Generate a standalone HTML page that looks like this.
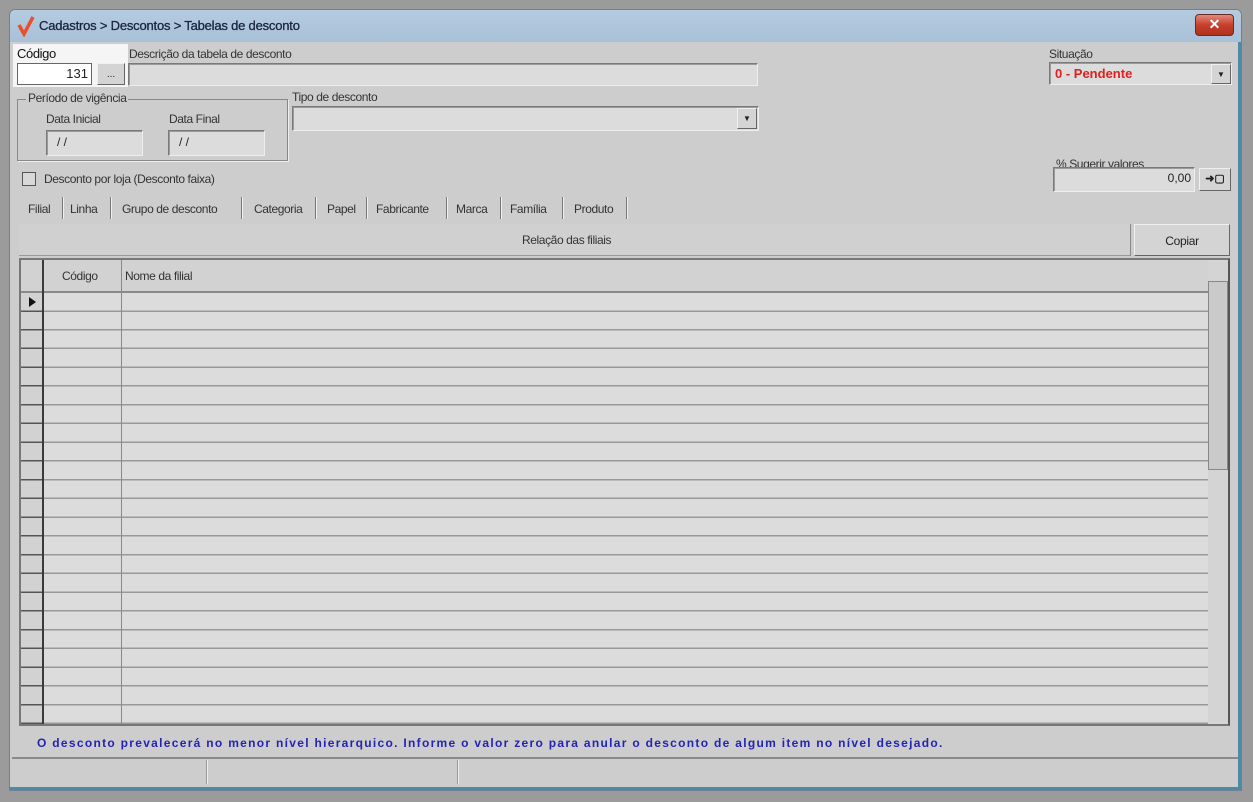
<!DOCTYPE html>
<html><head><meta charset="utf-8"><style>
*{margin:0;padding:0;box-sizing:border-box}
body{width:1253px;height:802px;background:#9b9b9b;position:relative;overflow:hidden;font-family:"Liberation Sans",sans-serif;font-size:12px;color:#222}
.a{position:absolute}
.win{left:9px;top:9px;width:1233px;height:782px;background:#cdcdcd;border:1px solid #6f8190;border-radius:6px 6px 0 0}
.title{left:10px;top:10px;width:1231px;height:32px;background:linear-gradient(#b4cbe0,#a9c1d8);border-radius:5px 5px 0 0}
.inp{background:#dcdcdc;border:1px solid #7a7a7a;border-right-color:#eee;border-bottom-color:#eee;box-shadow:inset 1px 1px 0 #9a9a9a}
.lbl{font-size:12px;letter-spacing:-0.4px;color:#333;white-space:nowrap}
.sep{width:2px;height:22px;border-left:1px solid #777;border-right:1px solid #f0f0f0}
.btn{background:#d4d4d4;border:1px solid #f0f0f0;border-right-color:#666;border-bottom-color:#666}
</style></head><body>
<div class="a win"></div>
<div class="a title"></div>
<div class="a" style="left:1238px;top:42px;width:3px;height:748px;background:#4d8aa3"></div>
<div class="a" style="left:9px;top:787px;width:1233px;height:3px;background:#4d8aa3"></div>
<svg class="a" style="left:16px;top:15px" width="20" height="22"><path d="M3 10 L8 19 L17 2" stroke="#e8502a" stroke-width="3.5" fill="none"/></svg>
<div class="a" style="left:39px;top:18px;font-size:13px;color:#1a2440;letter-spacing:-0.2px;-webkit-text-stroke:0.3px #1a2440">Cadastros &gt; Descontos &gt; Tabelas de desconto</div>
<div class="a" style="left:1195px;top:14px;width:39px;height:22px;border-radius:4px;background:linear-gradient(#e08a7c,#c6402c 50%,#b0301e);border:1px solid #6d2a22;color:#fff;text-align:center;font-weight:bold;font-size:14px;line-height:19px">✕</div>

<div class="a" style="left:13px;top:44px;width:115px;height:43px;background:#f5f5f5"></div>
<div class="a lbl" style="left:17px;top:46px;font-size:13px;color:#111">Código</div>
<div class="a" style="left:17px;top:63px;width:75px;height:22px;background:#fff;border:1px solid #666;text-align:right;padding-right:3px;font-size:13px;line-height:20px">131</div>
<div class="a btn" style="left:97px;top:63px;width:28px;height:22px;text-align:center;line-height:22px;font-size:10px">...</div>
<div class="a lbl" style="left:129px;top:47px">Descrição da tabela de desconto</div>
<div class="a inp" style="left:128px;top:63px;width:630px;height:23px"></div>

<div class="a lbl" style="left:1049px;top:47px">Situação</div>
<div class="a inp" style="left:1049px;top:62px;width:183px;height:23px;color:#e02020;font-weight:bold;font-size:13px;padding:3px 0 0 5px">0 - Pendente</div>
<div class="a btn" style="left:1211px;top:64px;width:20px;height:20px;font-size:8px;text-align:center;line-height:19px">▼</div>

<div class="a" style="left:17px;top:99px;width:271px;height:62px;border:1px solid #888;box-shadow:1px 1px 0 #eee"></div>
<div class="a lbl" style="left:26px;top:91px;background:#cdcdcd;padding:0 2px">Período de vigência</div>
<div class="a lbl" style="left:46px;top:112px">Data Inicial</div>
<div class="a lbl" style="left:169px;top:112px">Data Final</div>
<div class="a inp" style="left:46px;top:130px;width:97px;height:26px;padding:4px 0 0 10px">/ /</div>
<div class="a inp" style="left:168px;top:130px;width:97px;height:26px;padding:4px 0 0 10px">/ /</div>

<div class="a lbl" style="left:292px;top:90px">Tipo de desconto</div>
<div class="a inp" style="left:292px;top:106px;width:467px;height:25px"></div>
<div class="a btn" style="left:737px;top:108px;width:20px;height:21px;font-size:8px;text-align:center;line-height:20px">▼</div>

<div class="a lbl" style="left:1056px;top:157px">% Sugerir valores</div>
<div class="a inp" style="left:1053px;top:167px;width:142px;height:25px;text-align:right;padding:3px 3px 0 0">0,00</div>
<div class="a btn" style="left:1199px;top:168px;width:32px;height:23px;text-align:center;font-size:11px;line-height:21px;font-weight:bold">➜▢</div>

<div class="a" style="left:22px;top:172px;width:14px;height:14px;border:1px solid #555;background:#d8d8d8"></div>
<div class="a lbl" style="left:44px;top:172px">Desconto por loja (Desconto faixa)</div>

<div class="a lbl" style="left:28px;top:202px">Filial</div><div class="a sep" style="left:62px;top:197px"></div>
<div class="a lbl" style="left:70px;top:202px">Linha</div><div class="a sep" style="left:110px;top:197px"></div>
<div class="a lbl" style="left:122px;top:202px">Grupo de desconto</div><div class="a sep" style="left:241px;top:197px"></div>
<div class="a lbl" style="left:254px;top:202px">Categoria</div><div class="a sep" style="left:315px;top:197px"></div>
<div class="a lbl" style="left:327px;top:202px">Papel</div><div class="a sep" style="left:366px;top:197px"></div>
<div class="a lbl" style="left:376px;top:202px">Fabricante</div><div class="a sep" style="left:446px;top:197px"></div>
<div class="a lbl" style="left:456px;top:202px">Marca</div><div class="a sep" style="left:500px;top:197px"></div>
<div class="a lbl" style="left:510px;top:202px">Família</div><div class="a sep" style="left:562px;top:197px"></div>
<div class="a lbl" style="left:574px;top:202px">Produto</div><div class="a sep" style="left:626px;top:197px"></div>

<div class="a" style="left:19px;top:224px;width:1112px;height:32px;background:#d0d0d0;border-right:1px solid #888;box-shadow:inset 0 -1px 0 #999"></div>
<div class="a lbl" style="left:522px;top:233px">Relação das filiais</div>
<div class="a btn" style="left:1134px;top:224px;width:96px;height:32px;text-align:center;line-height:32px;letter-spacing:-0.3px">Copiar</div>

<div class="a" style="left:19px;top:258px;width:1211px;height:468px;border:2px solid #777;border-right-color:#555;background:#dcdcdc"></div>
<div class="a" style="left:21px;top:260px;width:1187px;height:33px;background:#d2d2d2;border-bottom:2px solid #8a8a8a"></div>
<div class="a" style="left:21px;top:293px;width:1187px;height:431px;background:repeating-linear-gradient(#dcdcdc 0,#dcdcdc 17.25px,#999 17.25px,#999 18.75px)"></div>
<div class="a" style="left:21px;top:293px;width:21px;height:431px;background:repeating-linear-gradient(#d2d2d2 0,#d2d2d2 17.25px,#555 17.25px,#555 18.75px)"></div>
<div class="a" style="left:42px;top:260px;width:2px;height:464px;background:#3a3a3a"></div>
<div class="a" style="left:121px;top:260px;width:1px;height:464px;background:#888"></div>
<div class="a lbl" style="left:62px;top:269px">Código</div>
<div class="a lbl" style="left:125px;top:269px">Nome da filial</div>
<div class="a" style="left:29px;top:297px;width:0;height:0;border-left:7px solid #111;border-top:5px solid transparent;border-bottom:5px solid transparent"></div>
<div class="a" style="left:1208px;top:260px;width:20px;height:464px;background:#d4d4d4"></div>
<div class="a" style="left:1208px;top:281px;width:20px;height:189px;background:#cacaca;border:1px solid #888"></div>

<div class="a" style="left:37px;top:736px;color:#2424b4;font-weight:bold;font-size:12px;letter-spacing:1.3px;white-space:nowrap">O desconto prevalecerá no menor nível hierarquico. Informe o valor zero para anular o desconto de algum item no nível desejado.</div>
<div class="a" style="left:12px;top:757px;width:1226px;height:2px;background:#8a8a8a"></div>
<div class="a" style="left:206px;top:760px;width:2px;height:24px;border-left:1px solid #999;border-right:1px solid #eee"></div>
<div class="a" style="left:457px;top:760px;width:2px;height:24px;border-left:1px solid #999;border-right:1px solid #eee"></div>
</body></html>
